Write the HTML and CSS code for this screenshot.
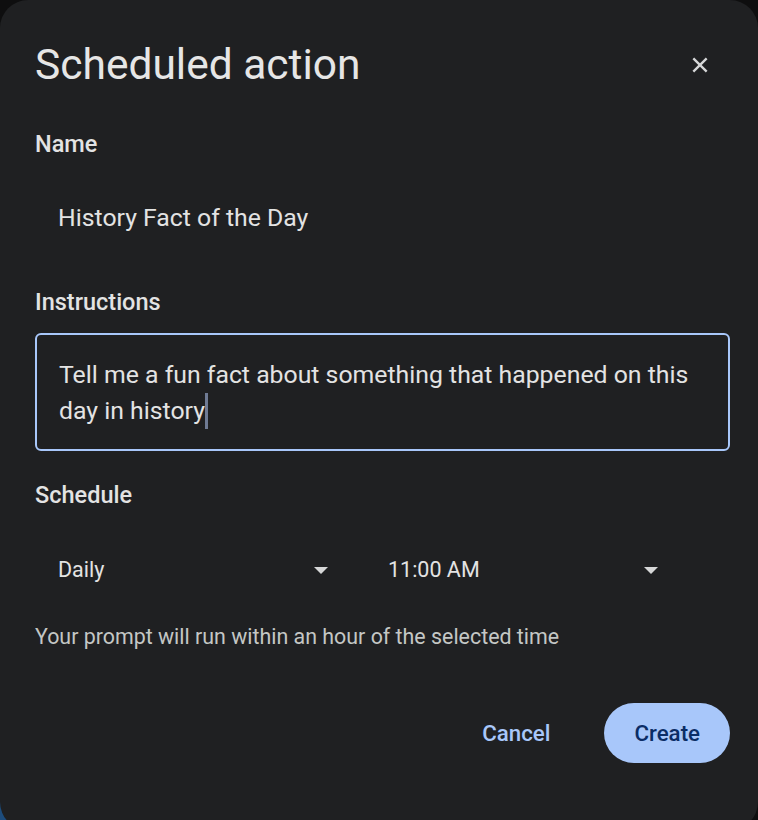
FILE: index.html
```html
<!DOCTYPE html>
<html>
<head>
<meta charset="utf-8">
<link rel="stylesheet" href="styles.css">
</head>
<body>
<div class="dialog">
  <div class="header">
    <h1 class="title">Scheduled action</h1>
    <button class="close" aria-label="Close">
      <svg width="24" height="24" viewBox="0 0 24 24"><path d="M4 4 L20 20 M20 4 L4 20" stroke="#d6d7d8" stroke-width="2.8" fill="none"/></svg>
    </button>
  </div>
  <div class="label">Name</div>
  <div class="value">History Fact of the Day</div>
  <div class="label label-instr">Instructions</div>
  <div class="textarea">Tell me a fun fact about something that happened on this day in history<span class="caret"></span></div>
  <div class="label label-sched">Schedule</div>
  <div class="selects">
    <div class="select"><span>Daily</span><span class="arrow"></span></div>
    <div class="select"><span>11:00 AM</span><span class="arrow"></span></div>
  </div>
  <div class="helper">Your prompt will run within an hour of the selected time</div>
  <div class="actions">
    <button class="btn text">Cancel</button>
    <button class="btn filled">Create</button>
  </div>
</div>
</body>
</html>
```
FILE: styles.css
```css
html, body {
  margin: 0;
  height: 100%;
  overflow: hidden;
}
body {
  background: radial-gradient(circle at 0 100%, #1d4c7c 0 44px, #0e0e0f 45px);
  font-family: Roboto, "Liberation Sans", sans-serif;
  color: #e3e3e3;
}
.dialog {
  width: 758px;
  height: 830px;
  box-sizing: border-box;
  background: #1f2022;
  border-radius: 28px;
  padding: 39px 28px 0 35px;
}
.header {
  display: flex;
  justify-content: space-between;
  align-items: center;
}
.title {
  margin: 0;
  font-size: 42.5px;
  font-weight: 400;
  line-height: 52px;
  color: #e6e6e6;
}
.close {
  background: none;
  border: 0;
  padding: 0;
  width: 24px;
  height: 24px;
  margin-right: 18px;
}
.close svg { display: block; width: 20px; height: 20px; margin: 2px; }
.label {
  font-size: 23.5px;
  font-weight: 500;
  line-height: 36px;
  color: #e3e3e3;
  margin-top: 35px;
}
.value {
  font-size: 24.8px;
  line-height: 36px;
  padding-left: 23px;
  margin-top: 38px;
}
.label-instr { margin-top: 48px; }
.textarea {
  margin-top: 13px;
  border: 2px solid #a8c7fa;
  border-radius: 6px;
  padding: 22px 20px 20px 22px;
  font-size: 24.8px;
  line-height: 36px;
}
.caret {
  display: inline-block;
  width: 3px;
  height: 36px;
  background: #6f7b94;
  vertical-align: top;
}
.label-sched { margin-top: 26px; }
.selects {
  display: flex;
  gap: 25px;
  margin-top: 40px;
}
.select {
  width: 305px;
  box-sizing: border-box;
  display: flex;
  justify-content: space-between;
  align-items: center;
  padding: 0 12px 0 23px;
  font-size: 21.5px;
  line-height: 34px;
  color: #e3e3e3;
}
.arrow {
  width: 0;
  height: 0;
  border-left: 7px solid transparent;
  border-right: 7px solid transparent;
  border-top: 7px solid #d6d7d8;
}
.helper {
  margin-top: 35px;
  font-size: 21.4px;
  line-height: 30px;
  color: #c4c7c5;
}
.actions {
  display: flex;
  justify-content: flex-end;
  align-items: center;
  gap: 30px;
  margin-top: 51px;
}
.btn {
  font-family: Roboto, "Liberation Sans", sans-serif;
  font-size: 22.3px;
  font-weight: 500;
  border: 0;
  height: 60px;
  border-radius: 30px;
  cursor: pointer;
}
.btn.text {
  background: none;
  color: #a8c7fa;
  padding: 0 24px;
}
.btn.filled {
  background: #a8c7fa;
  color: #0b2d66;
  padding: 0 30px;
}
```
